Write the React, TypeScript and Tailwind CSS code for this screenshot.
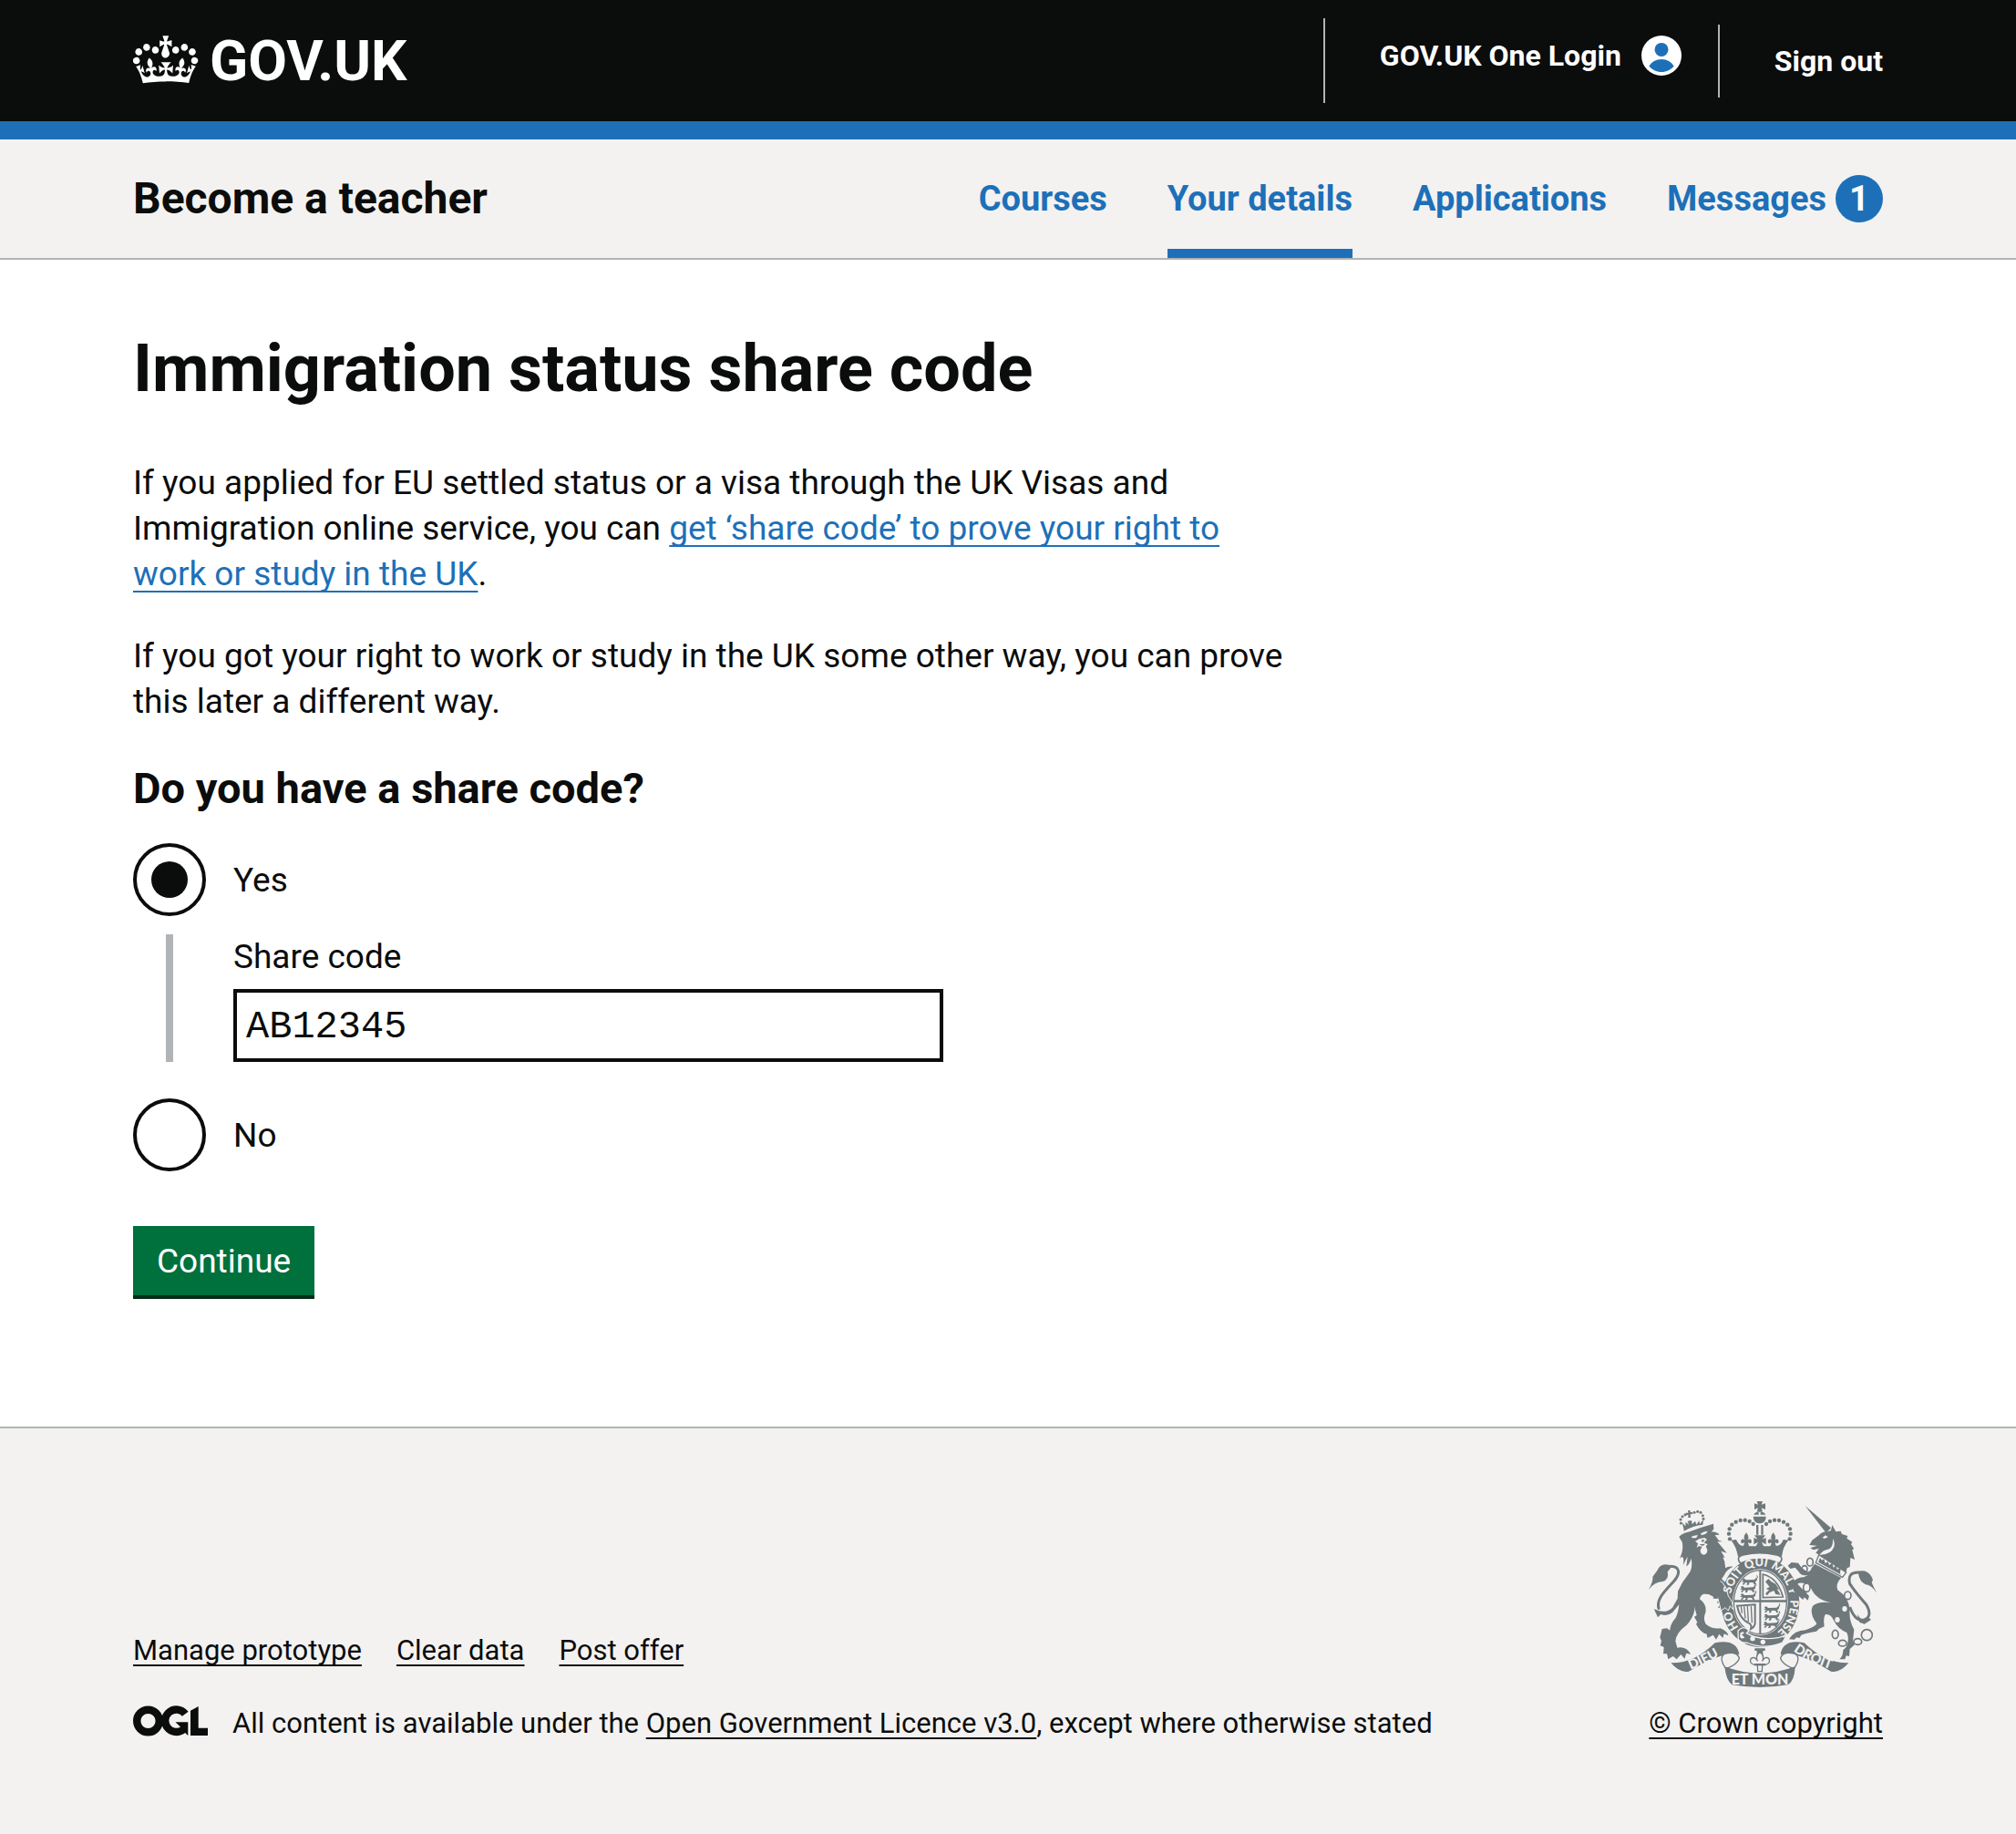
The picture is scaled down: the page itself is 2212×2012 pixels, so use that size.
import type { ReactNode } from "react";

const GREY = "#6f787b";
const PAPER = "#f3f2f1";

function Container({ children, className = "" }: { children: ReactNode; className?: string }) {
  return <div className={`mx-auto w-full max-w-[1980px] px-[30px] ${className}`}>{children}</div>;
}

function Crown() {
  return (
    <svg viewBox="0 0 36 32" className="mb-2 h-16 w-[72px] shrink-0" fill="currentColor" aria-hidden="true">
      <path d="M6.7 12.2c1 .4 2.1-.1 2.5-1s-.1-2.1-1-2.5c-1-.4-2.1.1-2.5 1-.4 1 0 2.1 1 2.5m-4.3 2.5c1 .4 2.1-.1 2.5-1s-.1-2.1-1-2.5c-1-.4-2.1.1-2.5 1-.5 1 0 2.1 1 2.5m-1.3 4.8c1 .4 2.1-.1 2.5-1 .4-1-.1-2.1-1-2.5-1-.4-2.1.1-2.5 1-.4 1 0 2.1 1 2.5m10.4-5.8c1 .4 2.1-.1 2.5-1s-.1-2.1-1-2.5c-1-.4-2.1.1-2.5 1s0 2.1 1 2.5m17.4-1.5c-1 .4-2.1-.1-2.5-1s.1-2.1 1-2.5c1-.4 2.1.1 2.5 1 .5 1 0 2.1-1 2.5m4.3 2.5c-1 .4-2.1-.1-2.5-1s.1-2.1 1-2.5c1-.4 2.1.1 2.5 1 .5 1 0 2.1-1 2.5m1.3 4.8c-1 .4-2.1-.1-2.5-1-.4-1 .1-2.1 1-2.5 1-.4 2.1.1 2.5 1 .4 1 0 2.1-1 2.5m-10.4-5.8c-1 .4-2.1-.1-2.5-1s.1-2.1 1-2.5c1-.4 2.1.1 2.5 1s0 2.1-1 2.5m-5.3-4.9 2.4 1.3V6.5l-2.4.8c-.1-.1-.1-.2-.2-.2s1-3 1-3h-3.4l1 3c-.1.1-.2.1-.2.2-.1.1-2.4-.7-2.4-.7v3.5L17 8.8c-.1.1 0 .2.1.3l-1.4 4.2c-.1.2-.1.4-.1.7 0 1.1.8 2.1 1.9 2.2h.6C19.2 16 20 15.1 20 14c0-.2 0-.4-.1-.7l-1.4-4.2c.2-.1.3-.2.3-.3m-1 20.3c4.6 0 8.9.3 12.8.9 1.1-4.6 2.4-7.2 3.8-9.1l-2.6-.9c.3 1.3.3 1.9 0 2.8-.4-.4-.8-1.2-1.1-2.4l-1.2 4.2c.8-.5 1.3-.9 2-.9-1.2 2.6-2.7 3.2-3.6 3-1.2-.2-1.7-1.3-1.5-2.2.3-1.3 1.6-1.6 2.2-.1 1.2-2.4-.8-3.1-2.1-2.4 2-1.9 2.2-3.6.6-5.7-2.2 1.7-2.2 3.3-1.2 5.6-1.3-1.5-3.3-.7-2.5 1.7.9-1.4 2.1-.6 1.9.8-.2 1.2-1.7 2.2-3.7 2-2.8-.2-3-2.2-3-3.7.7-.1 1.9.6 3 2l.4-4.4c-1.1 1.2-2.2 1.4-3.3 1.4.4-1.2 2.1-3.1 2.1-3.1h-5.5s1.7 1.9 2.1 3.1c-1.1 0-2.2-.3-3.3-1.4l.4 4.4c1.1-1.4 2.3-2.1 3-2-.1 1.6-.2 3.5-3 3.7-1.9.2-3.5-.8-3.7-2-.2-1.3 1-2.2 1.9-.8.7-2.4-1.3-3.1-2.6-1.7 1-2.3.9-4-1.2-5.6-1.6 2.1-1.4 3.8.6 5.7-1.3-.7-3.2 0-2.1 2.4.6-1.5 1.9-1.1 2.2.1.2.9-.3 1.9-1.5 2.2-.9.2-2.5-.4-3.7-3 .7 0 1.3.3 2 .9l-1.2-4.1c-.3 1.2-.7 1.9-1.1 2.4-.3-.9-.3-1.5 0-2.8l-2.5.9c1.4 1.9 2.7 4.5 3.8 9.1 3.9-.6 8.2-.9 12.7-.9" />
    </svg>
  );
}

function UserIcon() {
  return (
    <svg viewBox="0 0 44 44" className="size-11" aria-hidden="true">
      <circle cx="22" cy="22" r="22" fill="#fff" />
      <circle cx="22" cy="15.4" r="7.5" fill="#1d70b8" />
      <path d="M8.4 33.5C11 29 16 26 22 26s11 3 13.6 7.5C32.400 37.500 27.500 40 22 40S11.600 37.500 8.400 33.500z" fill="#1d70b8" />
    </svg>
  );
}

function OglLogo() {
  return (
    <svg viewBox="0 0 82 34" className="h-[34px] w-[82px] shrink-0" aria-hidden="true">
      <g fill="none" stroke="#0b0c0c" strokeWidth="8.400">
        <circle cx="16.500" cy="17" r="12.300" />
        <path d="M57.300 9.300A12.300 12.300 0 1 0 55 26.500" />
      </g>
      <path d="M46.500 18.300H60.300V33L56.500 29.500 50.500 27 53 24.500zM63 5.800L71.700 1V24.700H82V33H63z" fill="#0b0c0c" />
    </svg>
  );
}

const ARCH: [number, number][] = [
  [357, 204], [354, 187], [356, 171], [364, 157], [377, 148], [392, 143], [407, 142], [422, 146], [434, 155],
];

function Fleur({ x, y }: { x: number; y: number }) {
  return (
    <path
      transform={`translate(${x} ${y})`}
      d="M0-22Q11-8 5 3Q12-4 17 3Q20 12 11 14Q9 8 6 12L10 24H-10L-6 12Q-9 8-11 14Q-20 12-17 3Q-12-4-5 3Q-11-8 0-22z"
    />
  );
}

function PassantLion({ x, y }: { x: number; y: number }) {
  return (
    <g transform={`translate(${x} ${y})`}>
      <path d="M4 3L12 1L17 6L44 5Q51 4 50 -3L54 2Q54 11 47 13L51 20L45 22L41 15L29 14L26 22H19L22 15L15 15L10 22L5 20L11 13L2 12L8 8z" />
      <path d="M50 4Q60 -4 53 -9" fill="none" stroke={GREY} strokeWidth="3" />
    </g>
  );
}

function RoyalArms() {
  return (
    <svg viewBox="90 80 750 612" className="h-[204px] w-[250px]" fill={GREY} aria-hidden="true">
      {/* lion's coronet */}
      <path d="M205 170L200 150L211 162L212 148L222 157L218 145L231 143L233 156L243 145L247 157L256 144L258 155L270 139L268 157Q236 160 206 178z" />
      <path d="M219 110L227 110L226 116L234 115L234 123L227 122L228 134L220 134L220 124L213 126L212 118L220 118z" />
      {[[196, 152], [195, 140], [201, 130], [210, 124], [240, 117], [251, 114], [261, 117], [268, 127], [270, 138]].map(([x, y]) => (
        <circle key={`${x}-${y}`} cx={x} cy={y} r="4.500" />
      ))}
      {/* lion */}
      <path d="M190 197Q200 185 225 180Q262 165 303 154L304 172L296 180Q312 180 323 190L308 191L320 208L333 213L316 213Q332 232 347 250L328 244L341 266L334 264Q343 280 342 300Q352 292 368 295Q346 305 339 322L330 336Q346 348 357 372Q353 388 368 420L358 408L362 438L350 422L347 440L330 440L335 428L318 432L326 414L315 415L320 400L302 400L305 388L288 386Q262 380 258 402Q282 420 277 446Q268 466 278 484Q300 502 326 498Q350 508 352 522L338 516L334 530L322 517L312 535L302 520L284 530L280 516Q262 514 246 484L250 478L240 460L248 455Q240 435 242 410Q246 455 215 487Q180 512 178 540L184 562Q212 556 229 583L214 580L208 598L196 584L182 600L170 590L154 600L150 582L138 582L140 560L128 555L132 540L127 528L134 500L150 498L160 505Q160 485 178 465Q188 446 190 420L168 446Q150 460 130 452L120 462L107 434L122 440Q150 448 168 430L185 400L186 376Q200 345 222 318Q236 300 230 268Q224 288 214 294L218 262L203 290Q208 266 200 262L192 268Q206 238 200 214z" />
      <path d="M168 293Q130 277 118 308L103 328Q106 340 90 371Q108 345 136 344Q158 338 152 312z" />
      <path d="M160 294C196 294 194 320 172 344C142 376 112 404 124 436" fill="none" stroke={GREY} strokeWidth="9" />
      <g fill={PAPER}>
        <path d="M230 197Q242 190 252 192L246 201L233 201zM260 187Q272 178 284 178Q280 189 264 191zM243 212L256 204L274 200L282 206L272 216L284 222L278 228L283 240Q284 254 271 256Q259 254 260 240L266 229L254 228L248 234L252 219z" />
      </g>
      <path d="M262 208L274 205L268 216zM256 222L276 220L268 227z" />
      {/* crown above the shield */}
      <path d="M446 80H465L461 91L474 87V107L461 102L465 114H446L450 102L438 107V87L450 91z" />
      <path d="M436 124Q440 115 455 114Q471 115 475 124H458V116H452V124zM434 130H476Q476 152 455 153Q435 152 434 130z" />
      {ARCH.map(([x, y]) => (
        <g key={`${x}-${y}`}>
          <circle cx={x} cy={y} r="6.500" />
          <circle cx={911 - x} cy={y} r="6.500" />
        </g>
      ))}
      <path d="M444 158H451V190H444zM460 158H467V190H460zM438 192H474L464 205L476 200V222L462 214L470 232H441L450 214L436 222V200L448 205z" />
      <Fleur x={411} y={205} />
      <Fleur x={500} y={205} />
      <path d="M361 208L378 206Q384 222 396 226Q455 230 515 226Q528 222 533 206L550 208Q532 228 528 262Q455 240 384 262Q378 228 361 208z" />
      {/* garter */}
      <ellipse cx="457" cy="412" rx="129" ry="148" />
      <path d="M392 284Q374 262 404 256Q455 244 508 256Q540 262 520 284Q455 258 392 284z" fill={PAPER} stroke={GREY} strokeWidth="5" />
      <ellipse cx="457" cy="412" rx="91" ry="109" fill={PAPER} />
      <ellipse cx="457" cy="412" rx="87" ry="105" fill="none" stroke={GREY} strokeWidth="4" />
      <path d="M454 308H460V516H454zM370 405H544V412H370z" />
      <PassantLion x={393} y={333} />
      <PassantLion x={388} y={358} />
      <PassantLion x={388} y={383} />
      <PassantLion x={466} y={425} />
      <PassantLion x={466} y={450} />
      <PassantLion x={464} y={475} />
      <path d="M466 320Q515 332 532 395L466 397z" fill="none" stroke={GREY} strokeWidth="5" />
      <path d="M474 345L484 335L494 345L508 352L520 372L512 368L524 388L508 386L502 374L488 380L480 390L474 384L486 372L476 368L488 362z" />
      <path d="M381 424L440 420L440 482Q438 494 426 500Q430 488 422 482Q390 470 381 424z" fill="none" stroke={GREY} strokeWidth="6" />
      <path d="M394 426L397 448M404 426L408 466M415 425L418 476M427 425L430 480" stroke={GREY} strokeWidth="4" fill="none" />
      <path d="M384 506Q402 486 420 506L412 514Q455 540 520 528L545 520L530 545Q470 570 412 545Q398 548 385 535z" stroke={PAPER} strokeWidth="4" />
      <g fill={PAPER}>
        <circle cx="432" cy="532" r="8" />
        <circle cx="466" cy="543" r="8" />
        <path d="M392 512Q404 506 404 514L396 519L406 528Q396 536 390 526z" />
      </g>
      {/* lion's forepaw over the garter */}
      <path d="M300 330L332 346Q350 368 352 392Q368 410 368 436L358 424L352 440L342 430L328 440L318 400L300 380z" stroke={PAPER} strokeWidth="3" />
      <path d="M262 300L326 338L316 402L288 386L250 380z" />
      <path id="garter-line" d="M457 531A99 119 0 0 1 457 293A99 119 0 0 1 457 531" fill="none" />
      <g fill={PAPER} fontFamily="Lato, sans-serif" fontWeight="900" fontSize="38">
        <text><textPath href="#garter-line" startOffset="12%">HO</textPath></text>
        <text><textPath href="#garter-line" startOffset="29%">SOIT</textPath></text>
        <text><textPath href="#garter-line" startOffset="43%">QUI</textPath></text>
        <text><textPath href="#garter-line" startOffset="55%">MAL</textPath></text>
        <text><textPath href="#garter-line" startOffset="68%">Y</textPath></text>
        <text><textPath href="#garter-line" startOffset="74%">PENSE</textPath></text>
      </g>
      {/* unicorn */}
      <path d="M605 95L690 168L674 184z" />
      <path d="M619 224L628 208L650 192Q662 178 680 180L690 176L694 158L706 180L722 178L726 188L745 194L742 202L760 214L756 222L766 236L760 240L768 272L754 266L752 296L743 300L738 318L724 306L716 312L708 296L700 300L690 282L680 286L674 268L660 270L656 256Q690 256 700 230Q704 212 696 204Q698 232 680 238Q664 240 652 256L640 250L650 236L632 240L622 234L644 226z" />
      <path d="M662 199L672 192L680 198L668 203z" fill={PAPER} />
      <path d="M650 256L740 314L728 330L640 282z" fill={PAPER} stroke={GREY} strokeWidth="4" />
      <path d="M648 280L654 266L660 274L667 270L671 284L680 278L684 290L694 283L698 298L708 290L710 304L722 300L720 318L724 322z" />
      <path d="M636 286L724 332Q704 350 712 372Q748 396 752 436Q748 470 766 502L762 540L768 552L752 566L750 590L740 588L736 600L718 600Q730 590 730 570L740 560Q752 535 742 512Q712 500 700 474Q690 450 672 452Q664 462 668 492L650 500L642 508Q606 514 592 520L586 530L576 528L570 535L552 534Q570 504 606 504Q640 492 643 482Q618 450 630 424Q650 408 690 414Q640 404 624 366L604 350Q586 346 580 352Q592 366 604 376L618 392L614 406L602 396L598 404L584 392L568 376Q560 360 566 344Q580 330 600 330L616 322Q592 328 584 312L572 298L556 302L548 292L560 281L582 283Q592 300 606 308Q620 318 626 300z" />
      <path d="M752 428Q770 478 800 470Q828 458 806 420Q770 378 752 352Q742 312 784 314" fill="none" stroke={GREY} strokeWidth="9" />
      <path d="M768 314Q806 300 822 326Q832 340 824 346Q828 358 841 382Q824 356 804 354Q784 346 780 318zM776 452L794 474L812 460L822 470L800 484L784 478z" />
      <g fill="none" stroke={GREY} strokeWidth="5">
        <ellipse cx="621" cy="280" rx="10" ry="13" />
        <ellipse cx="603" cy="303" rx="9" ry="11" />
        <ellipse cx="610" cy="364" rx="11" ry="14" fill={PAPER} />
        <ellipse cx="745" cy="390" rx="11" ry="13" fill={PAPER} />
        <ellipse cx="704" cy="518" rx="10" ry="14" />
        <ellipse cx="728" cy="547" rx="13" ry="10" />
        <ellipse cx="778" cy="542" rx="13" ry="10" />
        <circle cx="808" cy="520" r="18" />
      </g>
      <ellipse cx="735" cy="434" rx="8" ry="9" fill={PAPER} />
      <ellipse cx="711" cy="470" rx="8" ry="9" fill={PAPER} />
      {/* fleur-de-lis pendant */}
      <path d="M439 564H473V572H466V590H446V572H439z" />
      <path d="M456 576Q474 592 463 606Q474 588 486 598Q492 614 474 618L464 618L463 640H449L448 618L438 618Q420 614 426 598Q438 588 449 606Q438 592 456 576z" fill={PAPER} stroke={GREY} strokeWidth="4" />
      <path d="M438 614H474V621H438z" />
      {/* motto ribbon */}
      <path d="M163 612Q240 614 308 546Q380 532 388 584Q330 572 222 640Q192 646 163 612z" />
      <path d="M748 612Q672 614 602 546Q532 532 524 584Q582 572 690 640Q720 646 748 612z" />
      <g fill={PAPER} stroke={GREY} strokeWidth="4">
        <path d="M342 628Q320 594 340 582Q384 572 388 598Q380 616 352 628z" />
        <path d="M570 628Q592 594 572 582Q528 572 524 598Q532 616 560 628z" />
      </g>
      <path d="M340 624Q455 668 572 624Q570 672 548 684Q455 700 364 684Q344 668 340 624z" />
      <path id="dieu-line" d="M228 634Q284 612 350 572" fill="none" />
      <path id="droit-line" d="M566 572Q620 614 720 642" fill="none" />
      <g fill={PAPER} fontFamily="Lato, sans-serif" fontWeight="900" fontSize="44">
        <text><textPath href="#dieu-line">DIEU</textPath></text>
        <text><textPath href="#droit-line">DROIT</textPath></text>
        <text x="456" y="684" textAnchor="middle" fontSize="48">ET MON</text>
      </g>
    </svg>
  );
}

const NAV = [
  { label: "Courses" },
  { label: "Your details", current: true },
  { label: "Applications" },
  { label: "Messages", count: 1 },
];

const FOOTER_LINKS = ["Manage prototype", "Clear data", "Post offer"];

const UNDERLINE = "underline decoration-2 [text-decoration-skip-ink:none]";

function Radio({ id, label, checked }: { id: string; label: string; checked?: boolean }) {
  return (
    <div className="flex items-center">
      <input
        type="radio"
        id={id}
        name="has-share-code"
        defaultChecked={checked}
        className="grid size-20 shrink-0 appearance-none place-content-center rounded-full border-4 border-[#0b0c0c] bg-white before:hidden before:size-10 before:rounded-full before:bg-[#0b0c0c] before:content-[''] checked:before:block"
      />
      <label htmlFor={id} className="pt-0.5 pl-[30px]">{label}</label>
    </div>
  );
}

export default function App() {
  return (
    <div className="flex min-h-screen flex-col bg-white font-['Roboto',sans-serif] text-[37px] leading-[50px] text-[#0b0c0c]">
      <header>
        <div className="bg-[#0b0c0c] text-white">
          <Container className="flex h-[133px] items-center justify-between">
            <a href="#" className="flex items-center gap-3 text-[62px] leading-[64px] font-bold" aria-label="GOV.UK">
              <Crown />
              <span>GOV.UK</span>
            </a>
            <nav aria-label="Account" className="flex items-center text-[32px] leading-10 font-bold">
              <a href="#" className="flex h-[93px] items-center gap-[22px] border-l-2 border-[#b1b4b6] pr-10 pb-3 pl-[60px]">
                <span>GOV.UK One Login</span>
                <UserIcon />
              </a>
              <a href="#" className="flex h-20 items-center border-l-2 border-[#b1b4b6] pl-[60px]">Sign out</a>
            </nav>
          </Container>
        </div>
        <div className="h-5 bg-[#1d70b8]" />
        <div className="border-b-2 border-[#b1b4b6] bg-[#f3f2f1]">
          <Container className="flex h-[130px] items-stretch justify-between">
            <a href="#" className="flex items-center text-[48px] leading-[60px] font-bold">Become a teacher</a>
            <nav aria-label="Service" className="flex gap-[66px] text-[38px] font-bold text-[#1d70b8]">
              {NAV.map(({ label, current, count }) => (
                <a
                  key={label}
                  href="#"
                  aria-current={current ? "page" : undefined}
                  className={`flex items-center gap-2.5 border-y-[10px] border-t-transparent ${current ? "border-b-[#1d70b8]" : "border-b-transparent"}`}
                >
                  {label}
                  {count && (
                    <span className="grid size-[52px] place-content-center rounded-full bg-[#1d70b8] text-white">{count}</span>
                  )}
                </a>
              ))}
            </nav>
          </Container>
        </div>
      </header>

      <main>
        <Container className="pt-20 pb-[140px]">
          <form className="max-w-[1280px]" onSubmit={(e) => e.preventDefault()}>
            <h1 className="mb-[60px] text-[72px] leading-[80px] font-bold">Immigration status share code</h1>
            <p className="mb-10">
              If you applied for EU settled status or a visa through the UK Visas and Immigration online service, you can{" "}
              <a href="#" className={`text-[#1d70b8] underline-offset-[6px] ${UNDERLINE}`}>
                get ‘share code’ to prove your right to work or study in the UK
              </a>
              .
            </p>
            <p className="mb-10">
              If you got your right to work or study in the UK some other way, you can prove this later a different way.
            </p>
            <fieldset>
              <legend className="mb-[30px] text-[47px] leading-[60px] font-bold">Do you have a share code?</legend>
              <Radio id="share-yes" label="Yes" checked />
              <div className="mt-5 mb-10 ml-9 flex max-w-[853px] flex-col gap-[10px] border-l-8 border-[#b1b4b6] pl-[66px]">
                <label htmlFor="share-code">Share code</label>
                <input
                  id="share-code"
                  type="text"
                  defaultValue="AB12345"
                  className="h-20 w-full border-4 border-[#0b0c0c] bg-white px-[10px] pt-1 font-['Liberation_Mono',monospace] text-[42px] outline-none"
                />
              </div>
              <Radio id="share-no" label="No" />
            </fieldset>
            <button
              type="submit"
              className="mt-[60px] h-20 border-b-4 border-[#002d18] bg-[#00703c] px-[26px] pt-0.5 text-white"
            >
              Continue
            </button>
          </form>
        </Container>
      </main>

      <footer className="grow border-t-2 border-[#b1b4b6] bg-[#f3f2f1] text-[31px] leading-10">
        <Container className="flex items-end justify-between pt-20 pb-[100px]">
          <div>
            <ul className="mb-10 flex gap-[38px]">
              {FOOTER_LINKS.map((l) => (
                <li key={l}>
                  <a href="#" className={`underline-offset-[5px] ${UNDERLINE}`}>{l}</a>
                </li>
              ))}
            </ul>
            <div className="flex items-start gap-[27px]">
              <OglLogo />
              <p>
                All content is available under the{" "}
                <a href="#" className={`underline-offset-[5px] ${UNDERLINE}`}>Open Government Licence v3.0</a>, except
                where otherwise stated
              </p>
            </div>
          </div>
          <a href="#" className={`flex flex-col items-start gap-5 underline-offset-[5px] ${UNDERLINE}`}>
            <RoyalArms />
            <span>© Crown copyright</span>
          </a>
        </Container>
      </footer>
    </div>
  );
}
